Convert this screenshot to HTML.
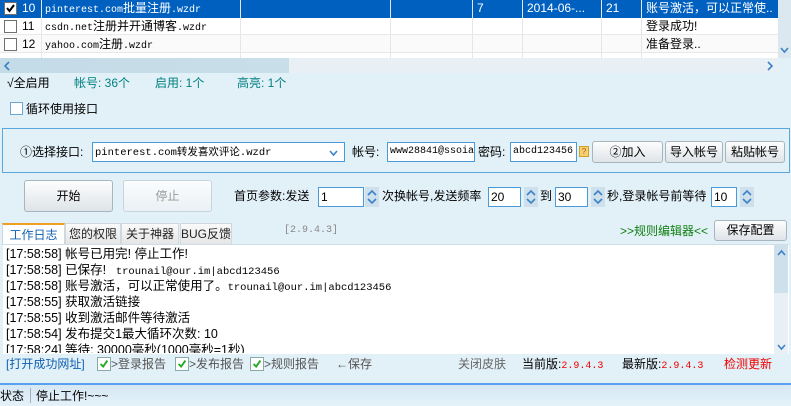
<!DOCTYPE html>
<html><head><meta charset="utf-8"><style>
*{margin:0;padding:0;box-sizing:border-box}
body{width:791px;height:406px;overflow:hidden;background:#e2f0f8;font-family:"Liberation Sans","Noto Sans CJK SC",sans-serif;font-size:12px;color:#000;position:relative}
.a{position:absolute;white-space:nowrap;line-height:16px;height:16px}
.m{font-family:"Liberation Mono","Noto Sans CJK SC",monospace;font-size:10px}
.row{position:absolute;left:0;width:778px;height:18px;border-bottom:1px solid #e8e8e8}
.cb{position:absolute;width:13px;height:13px;border:1px solid #707070;background:#fff}
.btn{position:absolute;border:1px solid #a8b4be;border-radius:3px;background:linear-gradient(#fdfdfd,#dfe4e8);text-align:center}
.inp{position:absolute;border:1px solid #4a9ad8;background:#fff;height:20px;line-height:18px;padding-left:2px}
.sp{position:absolute;width:14px;height:20px;background:#cde0ec}
.tab{position:absolute;top:223px;height:21px;background:linear-gradient(#fafafa,#e6e6e6);border:1px solid #d0d8dd;border-bottom:none;text-align:center;line-height:20px;color:#222}
.chk{position:absolute;width:14px;height:14px;border:1px solid #8aa;background:#fff}
.lg{position:absolute;left:3px;white-space:nowrap;line-height:16px;height:16px;font-size:12.5px}
</style></head><body>
<svg width="0" height="0" style="position:absolute"><defs>
<symbol id="spn" viewBox="0 0 14 20"><path d="M3 8 L7 4 L11 8 M3 12 L7 16 L11 12" fill="none" stroke="#3b82c8" stroke-width="1.6"/></symbol>
<symbol id="ck" viewBox="0 0 14 14"><path d="M3 7 L6 10 L11 3" fill="none" stroke="#2a2" stroke-width="2.2"/></symbol>
</defs></svg>
<!-- grid -->
<div style="position:absolute;left:0;top:0;width:791px;height:58px;background:#fff"></div>
<div class="row" style="top:0;background:#0060c0;color:#fff;border:none"></div>
<div class="row" style="top:17px"></div>
<div class="row" style="top:35px;background:#fafafa"></div>
<div style="position:absolute;left:41px;top:0;width:1px;height:58px;background:#e6e6e6"></div>
<div style="position:absolute;left:240px;top:0;width:1px;height:58px;background:#e6e6e6"></div>
<div style="position:absolute;left:390px;top:0;width:1px;height:58px;background:#e6e6e6"></div>
<div style="position:absolute;left:472px;top:0;width:1px;height:58px;background:#e6e6e6"></div>
<div style="position:absolute;left:522px;top:0;width:1px;height:58px;background:#e6e6e6"></div>
<div style="position:absolute;left:601px;top:0;width:1px;height:58px;background:#e6e6e6"></div>
<div style="position:absolute;left:641px;top:0;width:1px;height:58px;background:#e6e6e6"></div>
<div class="cb" style="left:4px;top:2px"><svg width="11" height="11" style="position:absolute;left:0;top:0"><path d="M2 5 L4.5 8 L9 2" fill="none" stroke="#000" stroke-width="2"/></svg></div>
<div class="cb" style="left:4px;top:20px"></div>
<div class="cb" style="left:4px;top:38px"></div>
<div class="a" style="left:22px;top:0;color:#fff">10</div>
<div class="a" style="left:22px;top:18px">11</div>
<div class="a" style="left:22px;top:36px">12</div>
<div class="a" style="left:45px;top:0;color:#fff"><span class="m">pinterest.com</span>批量注册<span class="m">.wzdr</span></div>
<div class="a" style="left:45px;top:18px"><span class="m">csdn.net</span>注册并开通博客<span class="m">.wzdr</span></div>
<div class="a" style="left:45px;top:36px"><span class="m">yahoo.com</span>注册<span class="m">.wzdr</span></div>
<div class="a" style="left:477px;top:0;color:#fff">7</div>
<div class="a" style="left:527px;top:0;color:#fff">2014-06-...</div>
<div class="a" style="left:606px;top:0;color:#fff">21</div>
<div class="a" style="left:646px;top:0;color:#fff">账号激活，可以正常使..</div>
<div class="a" style="left:646px;top:18px">登录成功!</div>
<div class="a" style="left:646px;top:36px">准备登录..</div>
<div style="position:absolute;left:778px;top:0;width:13px;height:58px;background:#dce8f0"></div>
<svg style="position:absolute;left:779px;top:46px" width="11" height="8"><path d="M2 2 L5.5 6 L9 2" fill="none" stroke="#3b82c8" stroke-width="1.6"/></svg>
<div style="position:absolute;left:0;top:58px;width:778px;height:15px;background:linear-gradient(90deg,#c4dce8,#cfe1ea)"></div>
<div style="position:absolute;left:289px;top:58px;width:489px;height:15px;background:#e8f0f5"></div>
<svg style="position:absolute;left:3px;top:61px" width="8" height="10"><path d="M6 1 L2 5 L6 9" fill="none" stroke="#3b82c8" stroke-width="1.6"/></svg>
<svg style="position:absolute;left:766px;top:61px" width="8" height="10"><path d="M2 1 L6 5 L2 9" fill="none" stroke="#3b82c8" stroke-width="1.6"/></svg>

<div class="a" style="left:7px;top:75px">√全启用</div>
<div class="a" style="left:74px;top:75px;color:#008080">帐号: 36个</div>
<div class="a" style="left:155px;top:75px;color:#008080">启用: 1个</div>
<div class="a" style="left:237px;top:75px;color:#008080">高亮: 1个</div>
<div class="cb" style="left:10px;top:102px;border-color:#6aa8d8"></div>
<div class="a" style="left:26px;top:101px">循环使用接口</div>

<div style="position:absolute;left:2px;top:128px;width:788px;height:45px;border:1px solid #5aa8dc"></div>
<div class="a" style="left:20px;top:144px">①选择接口:</div>
<div class="inp m" style="left:92px;top:142px;width:253px;font-size:10.5px">pinterest.com<span style="font-family:'Noto Sans CJK SC'">转发喜欢评论</span>.wzdr<svg style="position:absolute;right:5px;top:6px" width="11" height="8"><path d="M2 2 L5.5 6 L9 2" fill="none" stroke="#3b82c8" stroke-width="1.6"/></svg></div>
<div class="a" style="left:352px;top:144px">帐号:</div>
<div class="inp m" style="left:387px;top:142px;width:88px;overflow:hidden">www28841@ssoia</div>
<div class="a" style="left:478px;top:144px">密码:</div>
<div class="inp m" style="left:510px;top:142px;width:67px;overflow:hidden">abcd123456</div>
<div style="position:absolute;left:579px;top:146px;width:10px;height:11px;background:#f8d070;border:1px solid #d0a030;font-size:8px;line-height:9px;text-align:center;color:#a06000">?</div>
<div class="btn" style="left:592px;top:141px;width:71px;height:22px;line-height:20px">②加入</div>
<div class="btn" style="left:665px;top:141px;width:58px;height:22px;line-height:20px">导入帐号</div>
<div class="btn" style="left:725px;top:141px;width:60px;height:22px;line-height:20px">粘贴帐号</div>

<div class="btn" style="left:24px;top:180px;width:89px;height:32px;line-height:30px">开始</div>
<div class="btn" style="left:123px;top:180px;width:89px;height:32px;line-height:30px;color:#999;border-color:#c8d4dc;background:linear-gradient(#fbfdfe,#eaf0f4)">停止</div>
<div class="a" style="left:234px;top:188px">首页参数:发送</div>
<div class="inp" style="left:318px;top:187px;width:46px">1</div>
<svg class="sp" style="left:365px;top:187px"><use href="#spn"/></svg>
<div class="a" style="left:382px;top:188px">次换帐号,发送频率</div>
<div class="inp" style="left:488px;top:187px;width:33px">20</div>
<svg class="sp" style="left:524px;top:187px"><use href="#spn"/></svg>
<div class="a" style="left:540px;top:188px">到</div>
<div class="inp" style="left:555px;top:187px;width:33px">30</div>
<svg class="sp" style="left:591px;top:187px"><use href="#spn"/></svg>
<div class="a" style="left:607px;top:188px">秒,登录帐号前等待</div>
<div class="inp" style="left:711px;top:187px;width:26px">10</div>
<svg class="sp" style="left:740px;top:187px"><use href="#spn"/></svg>

<div class="tab" style="left:2px;width:63px;background:#fff;border-top:2px solid #f0a020;color:#1060b0;height:22px">工作日志</div>
<div class="tab" style="left:65px;width:56px">您的权限</div>
<div class="tab" style="left:121px;width:58px">关于神器</div>
<div class="tab" style="left:180px;width:52px">BUG反馈</div>
<div class="a m" style="left:284px;top:223px;color:#888">[2.9.4.3]</div>
<div class="a" style="left:620px;top:223px;color:#108010">&gt;&gt;规则编辑器&lt;&lt;</div>
<div class="btn" style="left:714px;top:220px;width:73px;height:21px;line-height:19px">保存配置</div>

<div style="position:absolute;left:3px;top:244px;width:786px;height:110px;background:#fff;border-top:1px solid #cfdfe8"></div>
<div style="position:absolute;left:774px;top:245px;width:14px;height:109px;background:#e8f0f5"></div>
<div style="position:absolute;left:774px;top:245px;width:14px;height:48px;background:#cde0ec"></div>
<svg style="position:absolute;left:776px;top:249px" width="11" height="8"><path d="M2 6 L5.5 2 L9 6" fill="none" stroke="#3b82c8" stroke-width="1.6"/></svg>
<svg style="position:absolute;left:776px;top:343px" width="11" height="8"><path d="M2 2 L5.5 6 L9 2" fill="none" stroke="#3b82c8" stroke-width="1.6"/></svg>
<div style="position:absolute;left:3px;top:245px;width:770px;height:108px;overflow:hidden">
<div class="lg" style="top:1px">[17:58:58] 帐号已用完! 停止工作!</div>
<div class="lg" style="top:17px">[17:58:58] 已保存! <span class="m" style="font-size:10.5px">&nbsp;trounail@our.im|abcd123456</span></div>
<div class="lg" style="top:33px">[17:58:58] 账号激活，可以正常使用了。<span class="m" style="font-size:10.5px">trounail@our.im|abcd123456</span></div>
<div class="lg" style="top:49px">[17:58:55] 获取激活链接</div>
<div class="lg" style="top:65px">[17:58:55] 收到激活邮件等待激活</div>
<div class="lg" style="top:81px">[17:58:54] 发布提交1最大循环次数: 10</div>
<div class="lg" style="top:97px">[17:58:24] 等待: 30000毫秒(1000毫秒=1秒)</div>
</div>

<div class="a" style="left:6px;top:356px;color:#1060b0">[打开成功网址]</div>
<svg class="chk" style="left:97px;top:357px"><use href="#ck"/></svg><div class="a" style="left:111px;top:356px;color:#555">&gt;登录报告</div>
<svg class="chk" style="left:175px;top:357px"><use href="#ck"/></svg><div class="a" style="left:189px;top:356px;color:#555">&gt;发布报告</div>
<svg class="chk" style="left:250px;top:357px"><use href="#ck"/></svg><div class="a" style="left:264px;top:356px;color:#555">&gt;规则报告</div>
<div class="a" style="left:336px;top:356px;color:#555">←保存</div>
<div class="a" style="left:458px;top:356px;color:#666">关闭皮肤</div>
<div class="a" style="left:522px;top:356px">当前版:<span class="m" style="color:#e00">2.9.4.3</span></div>
<div class="a" style="left:622px;top:356px">最新版:<span class="m" style="color:#e00">2.9.4.3</span></div>
<div class="a" style="left:724px;top:356px;color:#e00">检测更新</div>

<div style="position:absolute;left:0;top:383px;width:791px;height:2px;background:#5aa0f0"></div>
<div style="position:absolute;left:0;top:385px;width:791px;height:21px;background:linear-gradient(#d6e8f4,#e4f1f9)"></div>
<div class="a" style="left:0;top:388px">状态</div>
<div style="position:absolute;left:30px;top:388px;width:1px;height:15px;background:#a0b0bc"></div>
<div class="a" style="left:36px;top:388px">停止工作!~~~</div>
</body></html>
